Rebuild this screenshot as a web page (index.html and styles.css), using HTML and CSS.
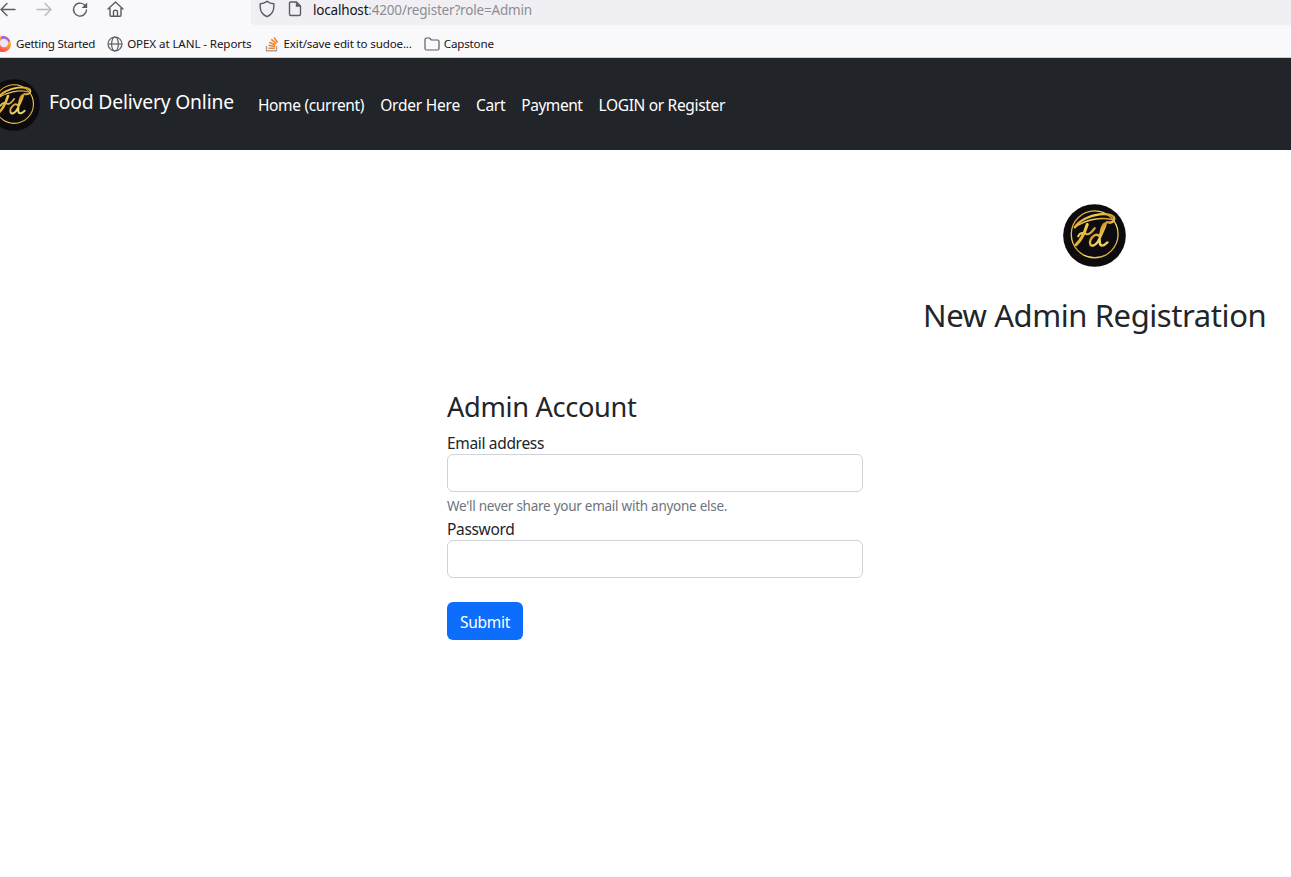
FILE: index.html
```html
<!DOCTYPE html>
<html lang="en">
<head>
<meta charset="utf-8">
<title>Food Delivery Online</title>
<link rel="stylesheet" href="styles.css">
</head>
<body>
<svg class="defs" width="0" height="0" aria-hidden="true">
  <defs>
    <linearGradient id="gold" x1="0" y1="0" x2="187" y2="187" gradientUnits="userSpaceOnUse">
      <stop offset=".15" stop-color="#c98a1c"/><stop offset=".35" stop-color="#f2cf55"/>
      <stop offset=".48" stop-color="#d39a2a"/><stop offset=".6" stop-color="#f5de70"/>
      <stop offset=".9" stop-color="#b07a1c"/>
    </linearGradient>
    <radialGradient id="fire" cx=".8" cy=".1" r="1">
      <stop offset="0" stop-color="#ffe14a"/><stop offset=".5" stop-color="#ff9a2e"/><stop offset="1" stop-color="#ff3860"/>
    </radialGradient>
    <symbol id="logo" viewBox="0 0 187 187">
      <circle cx="93.500" cy="93.500" r="93" fill="#0d0b0e"/>
      <g fill="none" stroke="url(#gold)" stroke-linecap="round" stroke-linejoin="round">
        <circle cx="94" cy="90" r="69.500" stroke-width="4"/>
        <path stroke-width="7" d="M35 69C48 49 78 34 108 31C135 28 154 35 152 45C151 53 142 57 130 54"/>
        <path stroke-width="4.500" d="M35 69C66 48 112 37 143 46"/>
        <path stroke-width="9" d="M72 61C64 86 54 108 39 121"/>
        <path stroke-width="6.500" d="M45 96C50 85 61 84 69 89C77 93 86 83 94 72"/>
        <path stroke-width="7" d="M106 94C96 85 80 101 80 115C81 130 98 125 107 105C114 90 124 72 127 58C117 54 107 94 109 114C110 127 120 126 132 114"/>
      </g>
    </symbol>
  </defs>
</svg>

<header class="browser">
  <div class="toolbar">
    <div class="controls">
      <svg class="control" viewBox="0 0 18 18"><path d="M16 9.500H2M8 3.500L2 9.500L8 15.500"/></svg>
      <svg class="control control-off" viewBox="0 0 18 18"><path d="M2 9.500H16M10 3.500L16 9.500L10 15.500"/></svg>
      <svg class="control" viewBox="0 0 18 18"><path d="M15.500 10A6.500 6.500 0 1 1 13 4.500L15 6.500"/><path class="solid" d="M16.200 2.500V8H10.700Z"/></svg>
      <svg class="control" viewBox="0 0 18 18"><path d="M1 9L8.500 2L16 9M3 8V15.200Q3 16.200 4 16.200H13Q14 16.200 14 15.200V8M6.500 16V11.500Q6.500 10.300 8.500 10.300Q10.500 10.300 10.500 11.500V16"/></svg>
    </div>
    <div class="address">
      <svg class="control" viewBox="0 0 18 18"><path d="M9 1.200Q12 3.500 15.800 3.700V7C15.800 11.500 13.500 14.800 9 16.700C4.500 14.800 2.200 11.500 2.200 7V3.700Q6 3.500 9 1.200Z"/></svg>
      <svg class="control page-icon" viewBox="0 0 18 18"><path d="M4.500 2H10.500L14.500 6V14Q14.500 15.500 13 15.500H5Q3.500 15.500 3.500 14V3Q3.500 2 4.500 2Z"/><path class="solid" d="M9.800 2V6.800H14.500Z"/></svg>
      <span class="url"><span class="host">localhost</span>:4200/register?role=Admin</span>
    </div>
  </div>
  <nav class="bookmarks">
    <a class="mark mark-start"><svg class="mark-icon" viewBox="0 0 16 16"><circle cx="8" cy="8" r="8" fill="url(#fire)"/><path d="M7 0A8 8 0 0 1 15 5L11 8L6 3Z" fill="#a35cf0"/><circle cx="9" cy="7" r="4.200" fill="#e9e4ff"/></svg><span>Getting Started</span></a>
    <a class="mark mark-opex"><svg class="mark-icon line" viewBox="0 0 16 16"><circle cx="8" cy="8" r="7"/><ellipse cx="8" cy="8" rx="3.400" ry="7"/><path d="M1 8H15"/></svg><span>OPEX at LANL - Reports</span></a>
    <a class="mark mark-exit"><svg class="mark-icon" viewBox="0 0 16 16" fill="none"><path stroke="#a0a2a6" stroke-width="1.400" d="M2.500 10V14.700H12.500V10"/><path stroke="#f48024" stroke-width="1.500" d="M4.500 12.200H10.800M4.500 9.300L11 10.500M5.300 6.200L11.300 9M7.300 3.400L12.300 7.600M10 1.300L13.500 6.500"/></svg><span>Exit/save edit to sudoe...</span></a>
    <a class="mark mark-cap"><svg class="mark-icon line" viewBox="0 0 16 16"><path d="M1 12.500V3.500Q1 2 2.500 2H5.500L7.300 4H13.500Q15 4 15 5.500V12.500Q15 14 13.500 14H2.500Q1 14 1 12.500Z"/></svg><span>Capstone</span></a>
  </nav>
</header>

<nav class="navbar">
  <svg class="brand-logo"><use href="#logo"/></svg>
  <a class="brand">Food Delivery Online</a>
  <div class="links">
    <a class="link link-home">Home (current)</a>
    <a class="link link-order">Order Here</a>
    <a class="link link-cart">Cart</a>
    <a class="link link-pay">Payment</a>
    <a class="link link-login">LOGIN or Register</a>
  </div>
</nav>

<main>
  <section class="heading">
    <svg class="heading-logo"><use href="#logo"/></svg>
    <h2 class="title"><span>New Admin Registration</span></h2>
  </section>
  <form class="form">
    <h3 class="form-title"><span>Admin Account</span></h3>
    <label class="label label-email" for="email"><span>Email address</span></label>
    <input class="field" id="email" type="email">
    <small class="hint"><span>We'll never share your email with anyone else.</span></small>
    <label class="label label-pass" for="password"><span>Password</span></label>
    <input class="field" id="password" type="password">
    <button class="submit" type="button"><span>Submit</span></button>
  </form>
</main>
</body>
</html>
```
FILE: styles.css
```css
* { box-sizing: border-box; }
body {
  margin: 0;
  background: #fff;
  color: #212529;
  font: 15.5px/24px "Noto Sans", "Open Sans", sans-serif;
  letter-spacing: -.33px;
  overflow: hidden;
}
.defs { display: block; height: 0; }
svg { flex: none; }

.browser { height: 58px; background: #f9f9fb; border-bottom: 1px solid #ccccd2; }
.toolbar { display: flex; height: 25px; }
.controls { display: flex; gap: 18px; width: 251px; margin-left: -1px; }
.control { width: 18px; height: 18px; fill: none; stroke: #5b5b66; stroke-width: 1.4; stroke-linecap: round; stroke-linejoin: round; }
.control-off { opacity: .4; }
.control .solid { fill: #5b5b66; stroke: none; }
.address { display: flex; flex: 1; gap: 10px; padding-left: 7px; background: #f0f0f4; border-radius: 0 0 0 4px; margin-left: 1px; }
.url { margin-left: -1px; font-size: 13.5px; letter-spacing: -.19px; line-height: 21px; color: #8c8c93; white-space: nowrap; }
.host { color: #15141a; }

.bookmarks { display: flex; gap: 12px; height: 32px; padding-top: 3px; margin-left: -5px; color: #15141a; font-size: 11.6px; line-height: 31px; }
.mark { display: flex; align-items: center; gap: 4px; height: 31px; white-space: nowrap; }
.mark-start { gap: 5px; letter-spacing: -.28px; }
.mark-opex { letter-spacing: -.1px; }
.mark-exit { letter-spacing: -.16px; }
.mark-cap { letter-spacing: -.17px; }
.mark-icon { width: 16px; height: 16px; }
.line { fill: none; stroke: #5b5b66; stroke-width: 1.2; }

.navbar { display: flex; height: 92px; background: #212529; color: #fff; white-space: nowrap; }
.brand-logo { width: 52px; height: 52px; margin: 21px 9px 0 -12px; }
.brand { margin-top: 29px; font-size: 19.3px; line-height: 30px; letter-spacing: -.17px; }
.links { display: flex; gap: 16px; margin: 35px 0 0 24px; }
.link-order { letter-spacing: -.22px; }
.link-cart { letter-spacing: -.3px; }
.link-pay { letter-spacing: -.45px; }

.heading { width: 342px; margin-left: 923px; padding-top: 54px; text-align: center; }
.heading-logo { display: block; width: 63px; height: 63px; margin: 0 auto; }
.title { margin: 29px 0 0; font-size: 31px; font-weight: 400; line-height: 38px; letter-spacing: -.42px; white-space: nowrap; }
.form { display: flex; flex-direction: column; width: 416px; margin: 56px 0 0 447px; white-space: nowrap; }
.form-title { margin: 0 0 7px; font-size: 27.2px; font-weight: 400; line-height: 34px; }
.label { display: block; height: 23px; }
.field { width: 416px; height: 38px; border: 1px solid #ced4da; border-radius: 6px; background: #fff; outline: 0; }
.hint { height: 26px; margin-top: 2px; font-size: 13.5px; letter-spacing: -.26px; color: #6c757d; }
.label-pass { margin-top: -3px; }
.submit { width: 76px; height: 38px; margin-top: 24px; padding: 2px 0 0; border: 0; border-radius: 6px; background: #0d6efd; color: #fff; font: inherit; letter-spacing: -.25px; }
```
